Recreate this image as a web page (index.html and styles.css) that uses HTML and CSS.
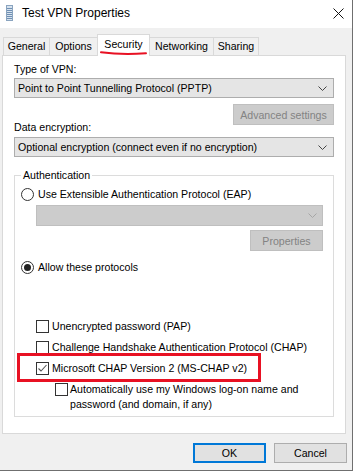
FILE: index.html
```html
<!DOCTYPE html>
<html>
<head>
<meta charset="utf-8">
<link rel="stylesheet" href="styles.css">
</head>
<body>
<div class="window">
  <div class="titlebar">
    <svg class="app-icon" width="7" height="16" viewBox="0 0 7 16">
      <rect x="0.5" y="0.5" width="6" height="15" fill="#d6e2ee" stroke="#8aa4bf"/>
      <path d="M1 3.5H6M1 5.5H6M1 7.5H6M1 9.5H6M1 11.5H6M1 13.5H6" stroke="#6f8fb3" stroke-width="1"/>
    </svg>
    <span class="title">Test VPN Properties</span>
    <svg class="close" width="11" height="11" viewBox="0 0 11 11">
      <path d="M0.5 0.5L10.5 10.5M10.5 0.5L0.5 10.5" stroke="#111" stroke-width="1"/>
    </svg>
  </div>
  <div class="body">
    <div class="tabs">
      <div class="tab t-general">General</div>
      <div class="tab t-options">Options</div>
      <div class="tab t-security active">Security
        <svg class="underline" width="48" height="5" viewBox="0 0 48 5">
          <path d="M1 1.2Q22 4 46 2.2" fill="none" stroke="#e81123" stroke-width="2" stroke-linecap="round"/>
        </svg>
      </div>
      <div class="tab t-networking">Networking</div>
      <div class="tab t-sharing">Sharing</div>
    </div>
    <div class="panel">
      <div class="label first">Type of VPN:</div>
      <div class="select">
        <span class="select-text">Point to Point Tunnelling Protocol (PPTP)</span>
        <svg class="chevron" width="9" height="5" viewBox="0 0 9 5"><path d="M0.5 0.5L4.5 4.5L8.5 0.5" fill="none" stroke="#444" stroke-width="1"/></svg>
      </div>
      <div class="btn disabled adv">Advanced settings</div>
      <div class="label enc">Data encryption:</div>
      <div class="select">
        <span class="select-text">Optional encryption (connect even if no encryption)</span>
        <svg class="chevron" width="9" height="5" viewBox="0 0 9 5"><path d="M0.5 0.5L4.5 4.5L8.5 0.5" fill="none" stroke="#444" stroke-width="1"/></svg>
      </div>
      <fieldset class="group">
        <legend>Authentication</legend>
        <div class="group-body">
          <div class="option eap"><span class="radio"></span>Use Extensible Authentication Protocol (EAP)</div>
          <div class="select disabled-select">
            <span class="select-text"></span>
            <svg class="chevron" width="9" height="5" viewBox="0 0 9 5"><path d="M0.5 0.5L4.5 4.5L8.5 0.5" fill="none" stroke="#a6a6a6" stroke-width="1"/></svg>
          </div>
          <div class="btn disabled props">Properties</div>
          <div class="option allow"><span class="radio checked"></span>Allow these protocols</div>
          <div class="option check-row pap"><span class="check"></span>Unencrypted password (PAP)</div>
          <div class="option check-row chap"><span class="check"></span>Challenge Handshake Authentication Protocol (CHAP)</div>
          <div class="option check-row mschap"><span class="check checked">
            <svg width="11" height="11" viewBox="0 0 11 11"><path d="M1.5 5.5L4 8L9.5 2" fill="none" stroke="#555" stroke-width="1.1"/></svg>
          </span>Microsoft CHAP Version 2 (MS-CHAP v2)<span class="highlight"></span></div>
          <div class="option auto"><span class="check"></span><span class="auto-text">Automatically use my Windows log-on name and<br>password (and domain, if any)</span></div>
        </div>
      </fieldset>
    </div>
    <div class="actions">
      <div class="btn ok">OK</div>
      <div class="btn cancel">Cancel</div>
    </div>
  </div>
</div>
</body>
</html>
```
FILE: styles.css
```css
* { box-sizing: border-box; }
html, body { margin: 0; padding: 0; background: #ffffff; }
body {
  font-family: "Liberation Sans", Arial, sans-serif;
  font-size: 10.6px;
  color: #000;
}
.window {
  width: 353px;
  height: 471px;
  border-right: 1px solid #6f6f6f;
  border-bottom: 1px solid #6f6f6f;
  background: #f0f0f0;
  display: flex;
  flex-direction: column;
}
.titlebar {
  height: 28px;
  background: #ffffff;
  display: flex;
  align-items: center;
  padding: 0 0 2px 6px;
  flex: none;
}
.app-icon { flex: none; }
.title {
  margin-left: 9px;
  font-size: 12px;
  line-height: 16px;
}
.close { margin-left: auto; margin-right: 8px; }
.body {
  flex: 1;
  display: flex;
  flex-direction: column;
  padding: 6px 0 0 2px;
}
.tabs {
  display: flex;
  align-items: flex-end;
  height: 22px;
  padding-left: 2px;
  margin-bottom: -1px;
  position: relative;
  z-index: 1;
}
.tab {
  height: 18px;
  margin-bottom: 1px;
  margin-left: -1px;
  border: 1px solid #d9d9d9;
  border-bottom: none;
  background: #f0f0f0;
  text-align: center;
  line-height: 17px;
  flex: none;
}
.t-general { width: 47px; }
.t-options { width: 49px; }
.t-security { width: 53px; }
.t-networking { width: 65px; }
.t-sharing { width: 46px; }
.tab.active {
  height: 22px;
  margin-bottom: 0;
  background: #ffffff;
  line-height: 19px;
  position: relative;
  z-index: 2;
}
.underline {
  position: absolute;
  left: 2px;
  top: 16px;
}
.panel {
  width: 344px;
  height: 379px;
  background: #ffffff;
  border: 1px solid #d9d9d9;
  padding: 6px 11px 0 11px;
  display: flex;
  flex-direction: column;
  flex: none;
}
.label { line-height: 15px; }
.label.enc { margin-top: -5px; margin-bottom: 1px; }
.select {
  margin-top: 1px;
  height: 20px;
  background: #e5e5e5;
  border: 1px solid #adadad;
  display: flex;
  align-items: center;
  padding: 0 6px 0 3px;
  flex: none;
}
.select-text { flex: 1; line-height: 15px; white-space: nowrap; }
.chevron { flex: none; }
.btn {
  height: 21px;
  display: flex;
  align-items: center;
  justify-content: center;
  background: #e1e1e1;
  border: 1px solid #adadad;
  flex: none;
}
.btn.disabled {
  background: #cccccc;
  border-color: #bfbfbf;
  color: #838383;
}
.adv { margin-top: 6px; width: 101px; align-self: flex-end; }
.group {
  margin: 11px 0 0 0;
  padding: 0 10px 0 6px;
  height: 249px;
  border: 1px solid #dcdcdc;
  min-width: 0;
}
.group legend {
  padding: 0 2px;
  line-height: 15px;
}
.group-body {
  display: flex;
  flex-direction: column;
}
.option {
  display: flex;
  align-items: center;
  height: 16px;
  line-height: 15px;
  white-space: nowrap;
}
.radio {
  width: 13px;
  height: 13px;
  border-radius: 50%;
  border: 1px solid #333333;
  background: #ffffff;
  margin-right: 4px;
  flex: none;
  display: flex;
  align-items: center;
  justify-content: center;
}
.radio.checked::after {
  content: "";
  width: 7px;
  height: 7px;
  border-radius: 50%;
  background: #222222;
}
.eap { margin-top: 3px; }
.disabled-select {
  margin-top: 3px;
  margin-left: 15px;
  height: 21px;
  background: #cccccc;
  border-color: #bfbfbf;
  padding-right: 5px;
}
.props { margin-top: 4px; width: 73px; align-self: flex-end; }
.allow { margin-top: 8px; }
.check-row { margin-left: 15px; }
.check {
  width: 13px;
  height: 13px;
  border: 1px solid #333333;
  background: #ffffff;
  margin-right: 3px;
  flex: none;
  display: flex;
  align-items: center;
  justify-content: center;
}
.pap { margin-top: 43px; }
.chap { margin-top: 5px; }
.mschap { margin-top: 5px; position: relative; }
.highlight {
  position: absolute;
  left: -19px;
  top: -7px;
  width: 244px;
  height: 29px;
  border: 3px solid #e81123;
}
.auto {
  margin-top: 6px;
  margin-left: 34px;
  height: auto;
  align-items: flex-start;
}
.auto .check { margin-top: 1px; margin-right: 2px; }
.auto-text { line-height: 15px; }
.actions {
  display: flex;
  justify-content: flex-end;
  gap: 8px;
  margin-top: 9px;
  padding-right: 5px;
}
.actions .btn { width: 73px; height: 20px; }
.btn.ok { border: 2px solid #0078d7; }
```
